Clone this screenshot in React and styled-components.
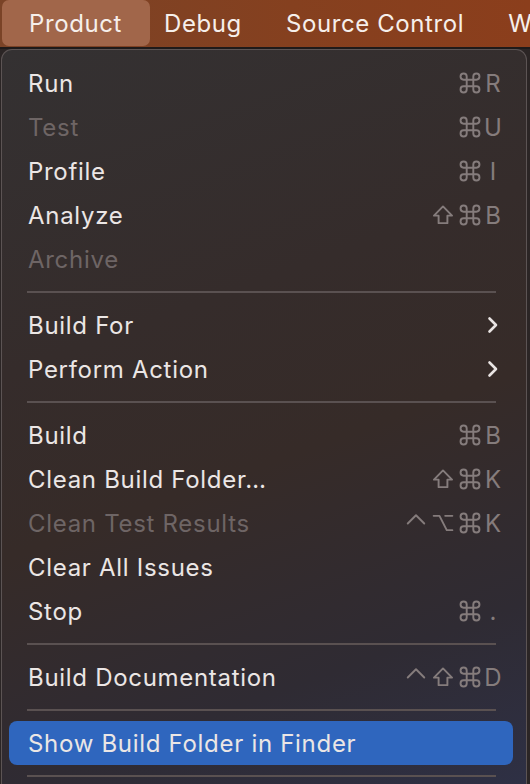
import React from "react";
import styled, { createGlobalStyle } from "styled-components";

const GlobalStyle = createGlobalStyle`
  html, body {
    margin: 0;
    padding: 0;
    background: #2b2525;
    overflow: hidden;
  }
  body {
    font-family: Inter, "Noto Sans", "DejaVu Sans", sans-serif;
    -webkit-font-smoothing: antialiased;
  }
`;

const Page = styled.div`
  width: 530px;
  height: 784px;
  display: flex;
  flex-direction: column;
  overflow: hidden;
`;

const MenuBar = styled.div`
  height: 47px;
  flex-shrink: 0;
  display: flex;
  align-items: stretch;
  background: linear-gradient(90deg, #7a4327 0%, #85401f 55%, #8b3e1c 100%);
  border-bottom: 2px solid #1e1a1a;
  padding-left: 2px;
  overflow: hidden;
`;

const BarItem = styled.div`
  display: flex;
  align-items: center;
  padding: ${(p) => (p.$active ? "0 28px 0 27px" : "0 22px")};
  margin-right: ${(p) => (p.$active ? "-8px" : "0")};
  font-size: 24px;
  letter-spacing: 0.6px;
  color: #f6efeb;
  white-space: nowrap;
  border-radius: 7px;
  background: ${(p) => (p.$active ? "#a1664a" : "transparent")};
  margin-bottom: 1px;
`;

const Panel = styled.div`
  margin-left: 1px;
  width: 524px;
  flex: 1;
  border: 1px solid #5c5454;
  border-bottom: none;
  border-radius: 11px 11px 0 0;
  background: linear-gradient(
    160deg,
    #343132 0%,
    #352c2b 35%,
    #362b28 55%,
    #2f2b33 80%,
    #2e3045 100%
  );
  padding-top: 11px;
  display: flex;
  flex-direction: column;
`;

const Row = styled.div`
  height: 44px;
  flex-shrink: 0;
  margin: 0 13px 0 7px;
  padding: 0 10px 0 19px;
  display: flex;
  align-items: center;
  justify-content: space-between;
  border-radius: 8px;
  background: ${(p) => (p.$selected ? "#2f66be" : "transparent")};
`;

const Label = styled.span`
  font-size: 24px;
  letter-spacing: 0.7px;
  color: ${(p) => (p.$disabled ? "#6e6565" : "#ebe6e5")};
  white-space: nowrap;
`;

const Shortcut = styled.div`
  display: flex;
  align-items: center;
  color: #857c7c;
`;

const ModKey = styled.span`
  width: 27px;
  height: 24px;
  display: flex;
  align-items: center;
  justify-content: center;
  margin-top: -1px;
`;

const MainKey = styled.span`
  width: 20px;
  text-align: center;
  font-size: 24px;
  letter-spacing: 0;
`;

const Separator = styled.div`
  height: 22px;
  flex-shrink: 0;
  display: flex;
  align-items: center;
  margin: 0 30px 0 25px;

  &::after {
    content: "";
    flex: 1;
    height: 2px;
    background: #5a5151;
  }
`;

const glyphs = {
  cmd: "M7 7 V4.2 A2.8 2.8 0 1 0 4.2 7 H15.8 A2.8 2.8 0 1 0 13 4.2 V15.8 A2.8 2.8 0 1 0 15.8 13 H4.2 A2.8 2.8 0 1 0 7 15.8 Z",
  shift: "M10 2.2 L18.2 10.6 H14 V17.4 H6 V10.6 H1.8 Z",
  opt: "M1.5 3.5 H6.8 L13.4 16.5 H18.5 M12 3.5 H18.5",
  ctrl: "M2.5 10.5 L10 3 L17.5 10.5",
};

const Glyph = ({ name }) => (
  <svg width="22" height="22" viewBox="0 0 20 20">
    <path
      d={glyphs[name]}
      fill="none"
      stroke="currentColor"
      strokeWidth="1.75"
      strokeLinecap="round"
      strokeLinejoin="round"
    />
  </svg>
);

const Chevron = () => (
  <svg width="14" height="18" viewBox="0 0 14 18" style={{ marginRight: 3 }}>
    <path
      d="M3.5 2.5 L10 9 L3.5 15.5"
      fill="none"
      stroke="#e9e4e3"
      strokeWidth="2.6"
      strokeLinecap="round"
      strokeLinejoin="round"
    />
  </svg>
);

const menu = [
  { label: "Run", keys: ["cmd"], key: "R" },
  { label: "Test", keys: ["cmd"], key: "U", disabled: true },
  { label: "Profile", keys: ["cmd"], key: "I" },
  { label: "Analyze", keys: ["shift", "cmd"], key: "B" },
  { label: "Archive", disabled: true },
  "sep",
  { label: "Build For", submenu: true },
  { label: "Perform Action", submenu: true },
  "sep",
  { label: "Build", keys: ["cmd"], key: "B" },
  { label: "Clean Build Folder…", keys: ["shift", "cmd"], key: "K" },
  { label: "Clean Test Results", keys: ["ctrl", "opt", "cmd"], key: "K", disabled: true },
  { label: "Clear All Issues" },
  { label: "Stop", keys: ["cmd"], key: "." },
  "sep",
  { label: "Build Documentation", keys: ["ctrl", "shift", "cmd"], key: "D" },
  "sep",
  { label: "Show Build Folder in Finder", selected: true },
  "sep",
];

const App = () => {
  return (
    <>
      <GlobalStyle />
      <Page>
        <MenuBar>
          <BarItem $active>Product</BarItem>
          <BarItem>Debug</BarItem>
          <BarItem>Source Control</BarItem>
          <BarItem>Window</BarItem>
        </MenuBar>
        <Panel>
          {menu.map((item, i) =>
            item === "sep" ? (
              <Separator key={i} />
            ) : (
              <Row key={i} $selected={item.selected}>
                <Label $disabled={item.disabled}>{item.label}</Label>
                {item.submenu && <Chevron />}
                {item.key && (
                  <Shortcut>
                    {item.keys.map((k, j) => (
                      <ModKey key={j}>
                        <Glyph name={k} />
                      </ModKey>
                    ))}
                    <MainKey>{item.key}</MainKey>
                  </Shortcut>
                )}
              </Row>
            )
          )}
        </Panel>
      </Page>
    </>
  );
};

export default App;
